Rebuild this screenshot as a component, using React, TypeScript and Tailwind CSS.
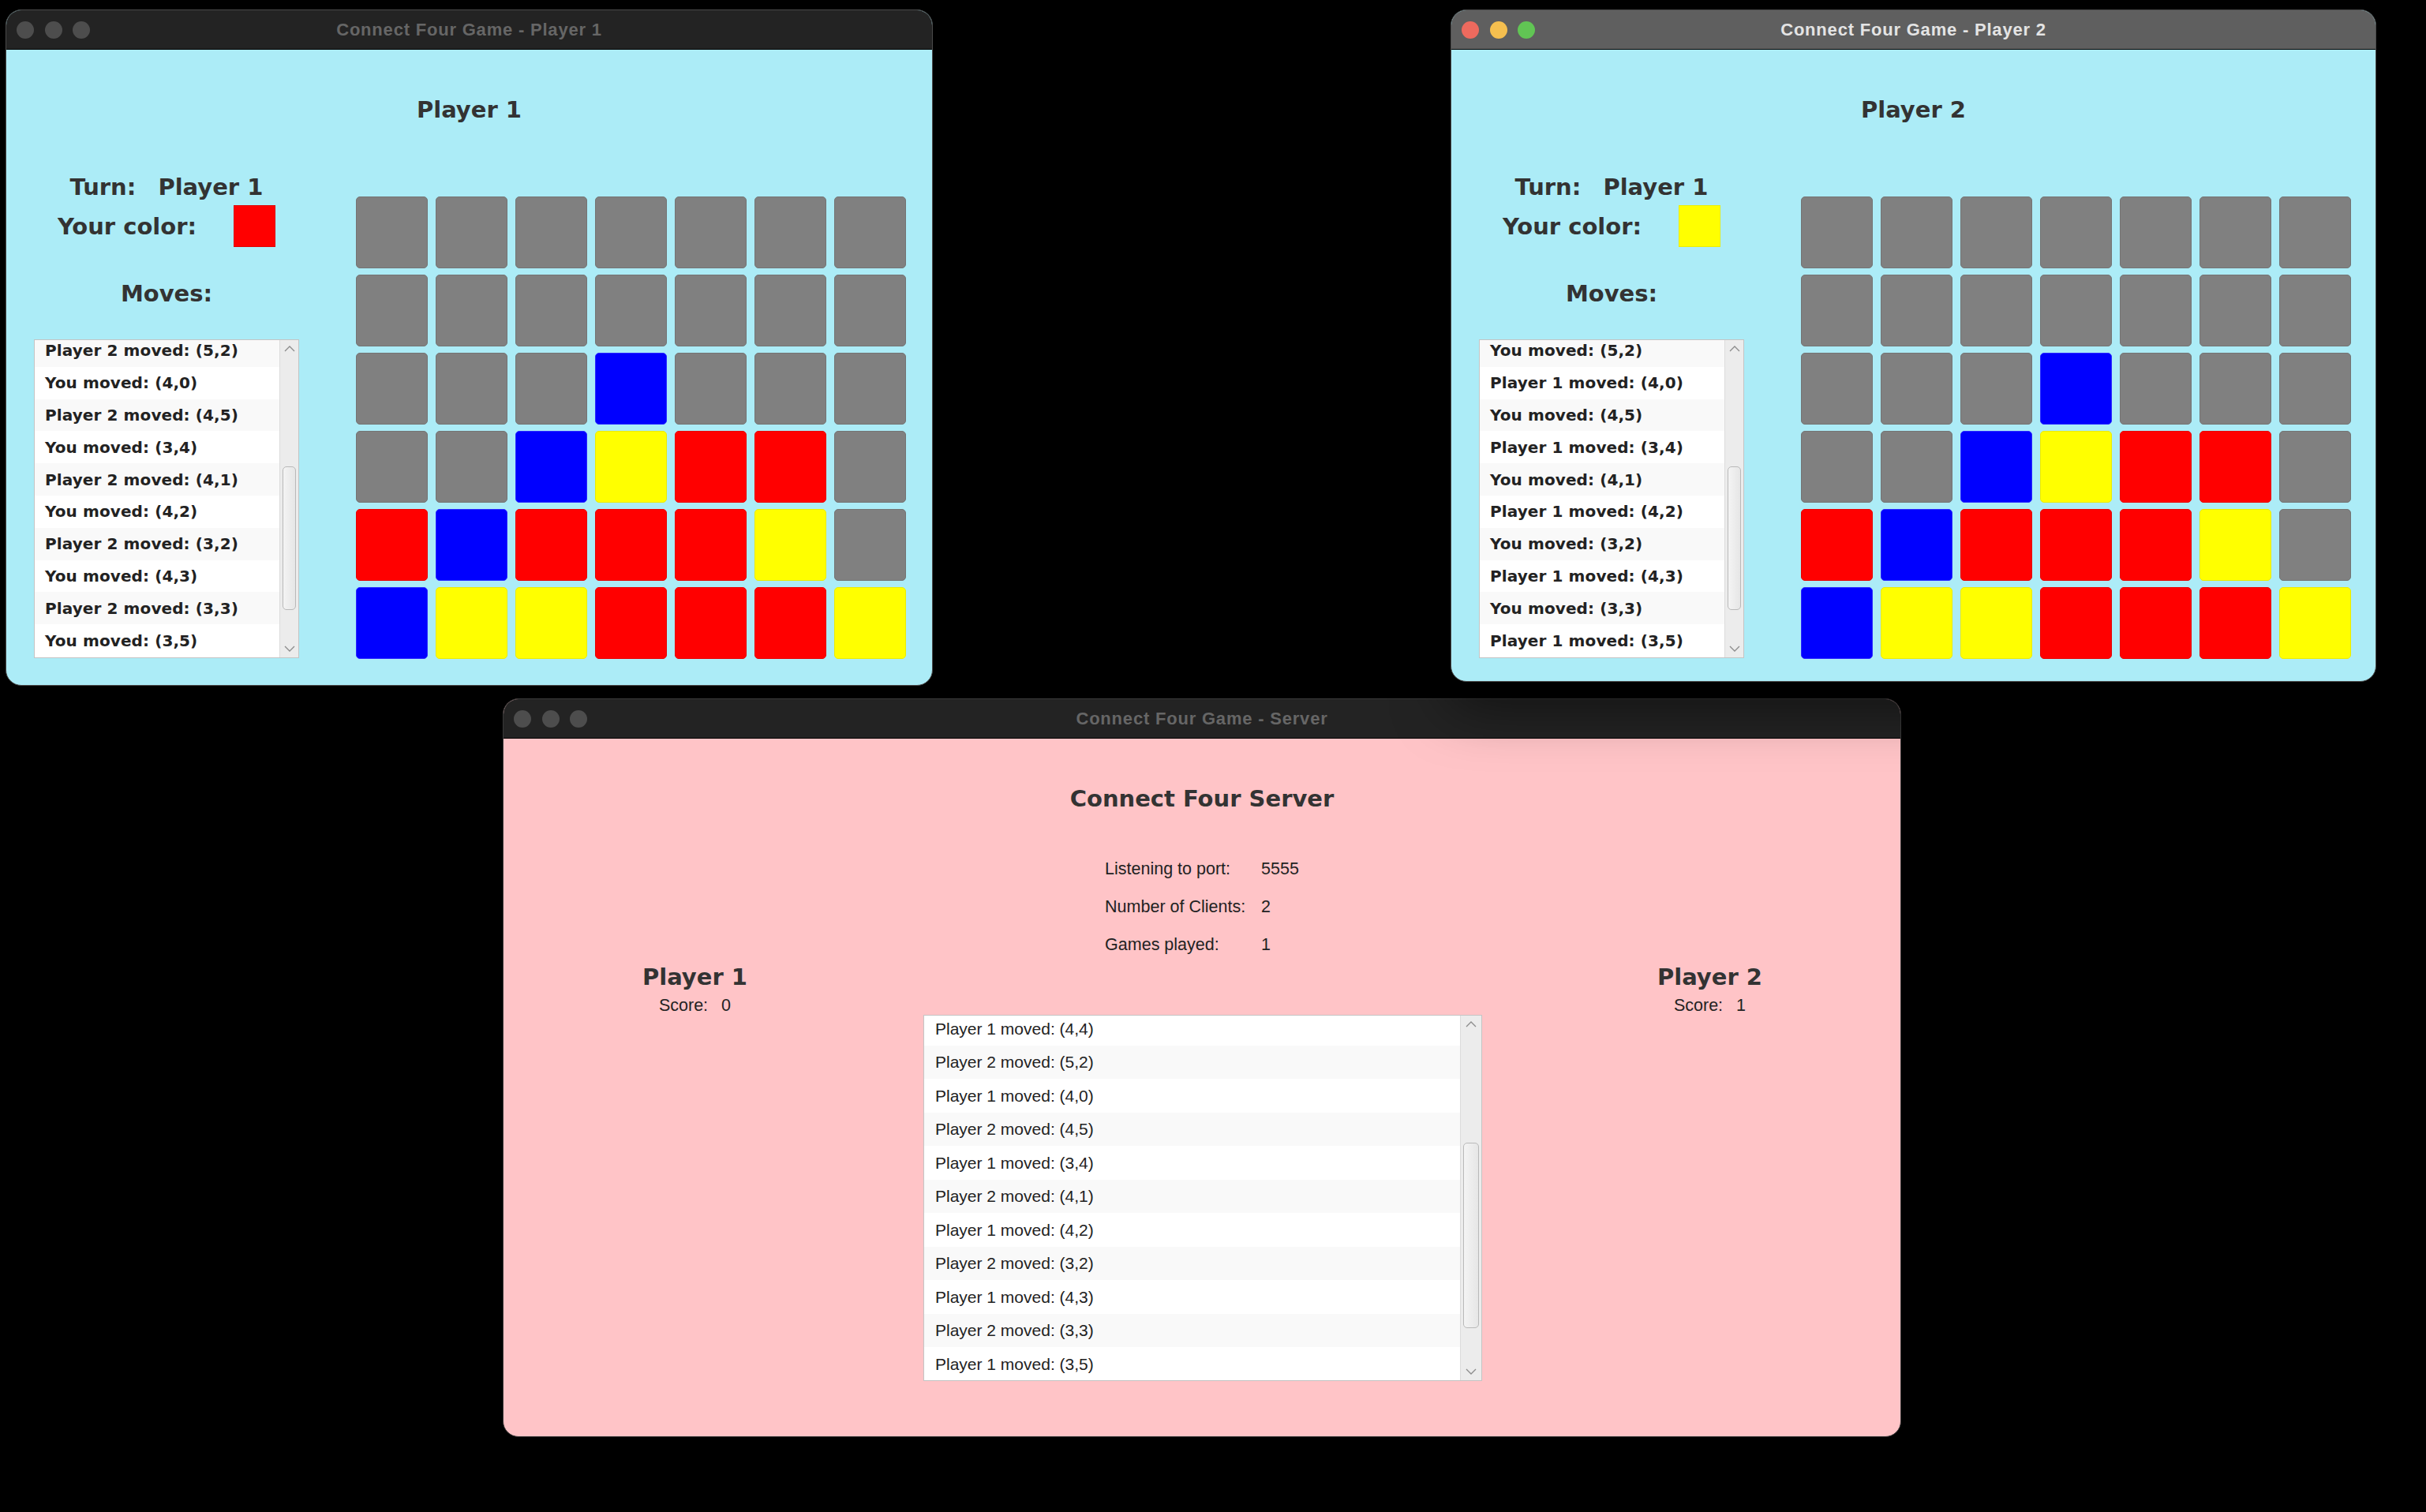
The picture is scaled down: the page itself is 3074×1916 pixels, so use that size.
import React from 'react';

type Cell = 'g' | 'b' | 'r' | 'y';

const board: Cell[][] = [
  ['g', 'g', 'g', 'g', 'g', 'g', 'g'],
  ['g', 'g', 'g', 'g', 'g', 'g', 'g'],
  ['g', 'g', 'g', 'b', 'g', 'g', 'g'],
  ['g', 'g', 'b', 'y', 'r', 'r', 'g'],
  ['r', 'b', 'r', 'r', 'r', 'y', 'g'],
  ['b', 'y', 'y', 'r', 'r', 'r', 'y'],
];

const cellStyle: Record<Cell, string> = {
  g: 'bg-[#808080] border-[#747474]',
  b: 'bg-[#0000ff] border-[#2a2aff]',
  r: 'bg-[#ff0000] border-[#e80000]',
  y: 'bg-[#ffff00] border-[#ecec00]',
};

const p1Moves = [
  'Player 2 moved: (5,2)',
  'You moved: (4,0)',
  'Player 2 moved: (4,5)',
  'You moved: (3,4)',
  'Player 2 moved: (4,1)',
  'You moved: (4,2)',
  'Player 2 moved: (3,2)',
  'You moved: (4,3)',
  'Player 2 moved: (3,3)',
  'You moved: (3,5)',
];

const p2Moves = [
  'You moved: (5,2)',
  'Player 1 moved: (4,0)',
  'You moved: (4,5)',
  'Player 1 moved: (3,4)',
  'You moved: (4,1)',
  'Player 1 moved: (4,2)',
  'You moved: (3,2)',
  'Player 1 moved: (4,3)',
  'You moved: (3,3)',
  'Player 1 moved: (3,5)',
];

const serverMoves = [
  'Player 1 moved: (4,4)',
  'Player 2 moved: (5,2)',
  'Player 1 moved: (4,0)',
  'Player 2 moved: (4,5)',
  'Player 1 moved: (3,4)',
  'Player 2 moved: (4,1)',
  'Player 1 moved: (4,2)',
  'Player 2 moved: (3,2)',
  'Player 1 moved: (4,3)',
  'Player 2 moved: (3,3)',
  'Player 1 moved: (3,5)',
];

const heading = "font-['DejaVu_Sans',sans-serif] font-bold text-[29px] leading-[34px] text-[#333333] whitespace-nowrap";
const plain = "font-['Liberation_Sans',Arial,sans-serif] text-[21.5px] leading-[24px] text-[#222222] whitespace-nowrap";

const Chevron = ({ up }: { up?: boolean }) => (
  <svg width="14" height="8" viewBox="0 0 14 8" fill="none">
    <polyline
      points={up ? '1,7 7,1 13,7' : '1,1 7,7 13,1'}
      stroke="#8c8c8c"
      strokeWidth="1.3"
    />
  </svg>
);

const TitleBar = ({ title, active }: { title: string; active?: boolean }) => (
  <div
    className={`relative flex h-[50px] shrink-0 items-center justify-center border-b border-black ${
      active ? 'bg-[#5f5f5f]' : 'bg-[#232323]'
    }`}
  >
    <div className="absolute left-[13px] top-1/2 flex -translate-y-1/2 gap-[13.5px]">
      <span className={`h-[22px] w-[22px] rounded-full ${active ? 'bg-[#ed6a5e]' : 'bg-[#4d4d4d]'}`} />
      <span className={`h-[22px] w-[22px] rounded-full ${active ? 'bg-[#f5bf4f]' : 'bg-[#4d4d4d]'}`} />
      <span className={`h-[22px] w-[22px] rounded-full ${active ? 'bg-[#61c554]' : 'bg-[#4d4d4d]'}`} />
    </div>
    <span
      className={`font-['Liberation_Sans',Arial,sans-serif] text-[22px] font-bold tracking-[0.8px] ${
        active ? 'text-[#e4e4e4]' : 'text-[#666666]'
      }`}
    >
      {title}
    </span>
  </div>
);

type ListProps = {
  items: string[];
  boxClass: string;
  offsetClass: string;
  rowClass: string;
  textClass: string;
  trackClass: string;
  thumbGapClass: string;
  thumbClass: string;
  firstShaded?: boolean;
};

const ListView = ({
  items,
  boxClass,
  offsetClass,
  rowClass,
  textClass,
  trackClass,
  thumbGapClass,
  thumbClass,
  firstShaded,
}: ListProps) => (
  <div className={`flex shrink-0 overflow-hidden border border-[#c4c4c4] bg-white ${boxClass}`}>
    <div className="flex-1 overflow-hidden">
      <div className={offsetClass}>
        {items.map((m, i) => (
          <div
            key={m + i}
            className={`flex items-center ${rowClass} ${
              (i % 2 === 0) === !!firstShaded ? 'bg-[#f9f9f9]' : 'bg-white'
            }`}
          >
            <span className={textClass}>{m}</span>
          </div>
        ))}
      </div>
    </div>
    <div className={`flex shrink-0 flex-col items-center border-l border-[#dcdcdc] bg-[#ececec] ${trackClass}`}>
      <div className="flex h-[22px] items-center justify-center">
        <Chevron up />
      </div>
      <div className={thumbGapClass} />
      <div className={`rounded-[5px] border border-[#b9b9b9] bg-gradient-to-r from-[#f4f4f4] to-[#e6e6e6] ${thumbClass}`} />
      <div className="flex-1" />
      <div className="flex h-[22px] items-center justify-center">
        <Chevron />
      </div>
    </div>
  </div>
);

const Board = () => (
  <div className="grid grid-cols-[repeat(7,91px)] gap-x-[10px] gap-y-[8px]">
    {board.flatMap((row, r) =>
      row.map((c, i) => (
        <div key={`${r}-${i}`} className={`h-[91px] w-[91px] rounded-[5px] border ${cellStyle[c]}`} />
      ))
    )}
  </div>
);

const PlayerWindow = ({
  name,
  title,
  colorClass,
  moves,
  active,
  posClass,
}: {
  name: string;
  title: string;
  colorClass: string;
  moves: string[];
  active?: boolean;
  posClass: string;
}) => (
  <div
    className={`absolute flex flex-col overflow-hidden rounded-[20px] border border-[#4a4a4a] bg-[#acecf7] ${posClass}`}
  >
    <TitleBar title={title} active={active} />
    <div className="flex flex-1 flex-col">
      <div className={`pt-[59px] text-center ${heading}`}>{name}</div>
      <div className="mt-[64px] flex pl-[35px]">
        <div className="flex w-[336px] flex-col items-center">
          <div className={`flex h-[34px] gap-[28px] ${heading}`}>
            <span>Turn:</span>
            <span>Player 1</span>
          </div>
          <div className="mt-[6px] flex h-[53px] items-center gap-[47px]">
            <span className={heading}>Your color:</span>
            <div className={`h-[53px] w-[53px] border ${colorClass}`} />
          </div>
          <div className={`mt-[42px] h-[34px] ${heading}`}>Moves:</div>
          <div className="mt-[41px]">
            <ListView
              items={moves}
              firstShaded
              boxClass="h-[404px] w-[336px]"
              offsetClass="-mt-[7px]"
              rowClass="h-[40.8px] pl-[13px]"
              textClass="font-['DejaVu_Sans',sans-serif] font-bold text-[20px] tracking-[0.1px] text-[#222222] whitespace-nowrap"
              trackClass="w-[24px]"
              thumbGapClass="h-[138px]"
              thumbClass="h-[182px] w-[17px]"
            />
          </div>
        </div>
        <div className="ml-[72px] mt-[29px]">
          <Board />
        </div>
      </div>
    </div>
  </div>
);

const ServerWindow = () => (
  <div className="absolute left-[637px] top-[885px] flex h-[936px] w-[1772px] flex-col overflow-hidden rounded-[20px] border border-[#3a3a3a] bg-[#ffc4c7]">
    <TitleBar title="Connect Four Game - Server" />
    <div className="flex flex-1 flex-col">
      <div className={`pt-[59px] text-center ${heading}`}>Connect Four Server</div>
      <div className="mx-auto mt-[60px] grid grid-cols-[198px_auto] gap-y-[24px]">
        <span className={plain}>Listening to port:</span>
        <span className={plain}>5555</span>
        <span className={plain}>Number of Clients:</span>
        <span className={plain}>2</span>
        <span className={plain}>Games played:</span>
        <span className={plain}>1</span>
      </div>
      <div className="mt-[12px] flex">
        <div className="flex w-[486px] flex-col items-center">
          <div className={heading}>Player 1</div>
          <div className={`mt-[7px] flex gap-[17px] ${plain}`}>
            <span>Score:</span>
            <span>0</span>
          </div>
        </div>
        <div className="ml-[47px] mt-[65px]">
          <ListView
            items={serverMoves}
            boxClass="h-[464px] w-[708px]"
            offsetClass="-mt-[5px]"
            rowClass="h-[42.5px] pl-[14px]"
            textClass="font-['Liberation_Sans',Arial,sans-serif] text-[21px] text-[#222222] whitespace-nowrap"
            trackClass="w-[27px]"
            thumbGapClass="h-[139px]"
            thumbClass="h-[235px] w-[20px]"
          />
        </div>
        <div className="ml-[47px] flex w-[484px] flex-col items-center">
          <div className={heading}>Player 2</div>
          <div className={`mt-[7px] flex gap-[17px] ${plain}`}>
            <span>Score:</span>
            <span>1</span>
          </div>
        </div>
      </div>
    </div>
  </div>
);

export default function App() {
  return (
    <div className="relative h-[1916px] w-[3074px] overflow-hidden bg-black">
      <PlayerWindow
        name="Player 1"
        title="Connect Four Game - Player 1"
        colorClass="bg-[#ff0000] border-[#e00000]"
        moves={p1Moves}
        posClass="left-[7px] top-[12px] h-[857px] w-[1175px]"
      />
      <ServerWindow />
      <PlayerWindow
        name="Player 2"
        title="Connect Four Game - Player 2"
        colorClass="bg-[#ffff00] border-[#eeee00]"
        moves={p2Moves}
        active
        posClass="left-[1838px] top-[12px] h-[852px] w-[1173px] z-10 shadow-[0_30px_70px_rgba(0,0,0,0.5)]"
      />
    </div>
  );
}
